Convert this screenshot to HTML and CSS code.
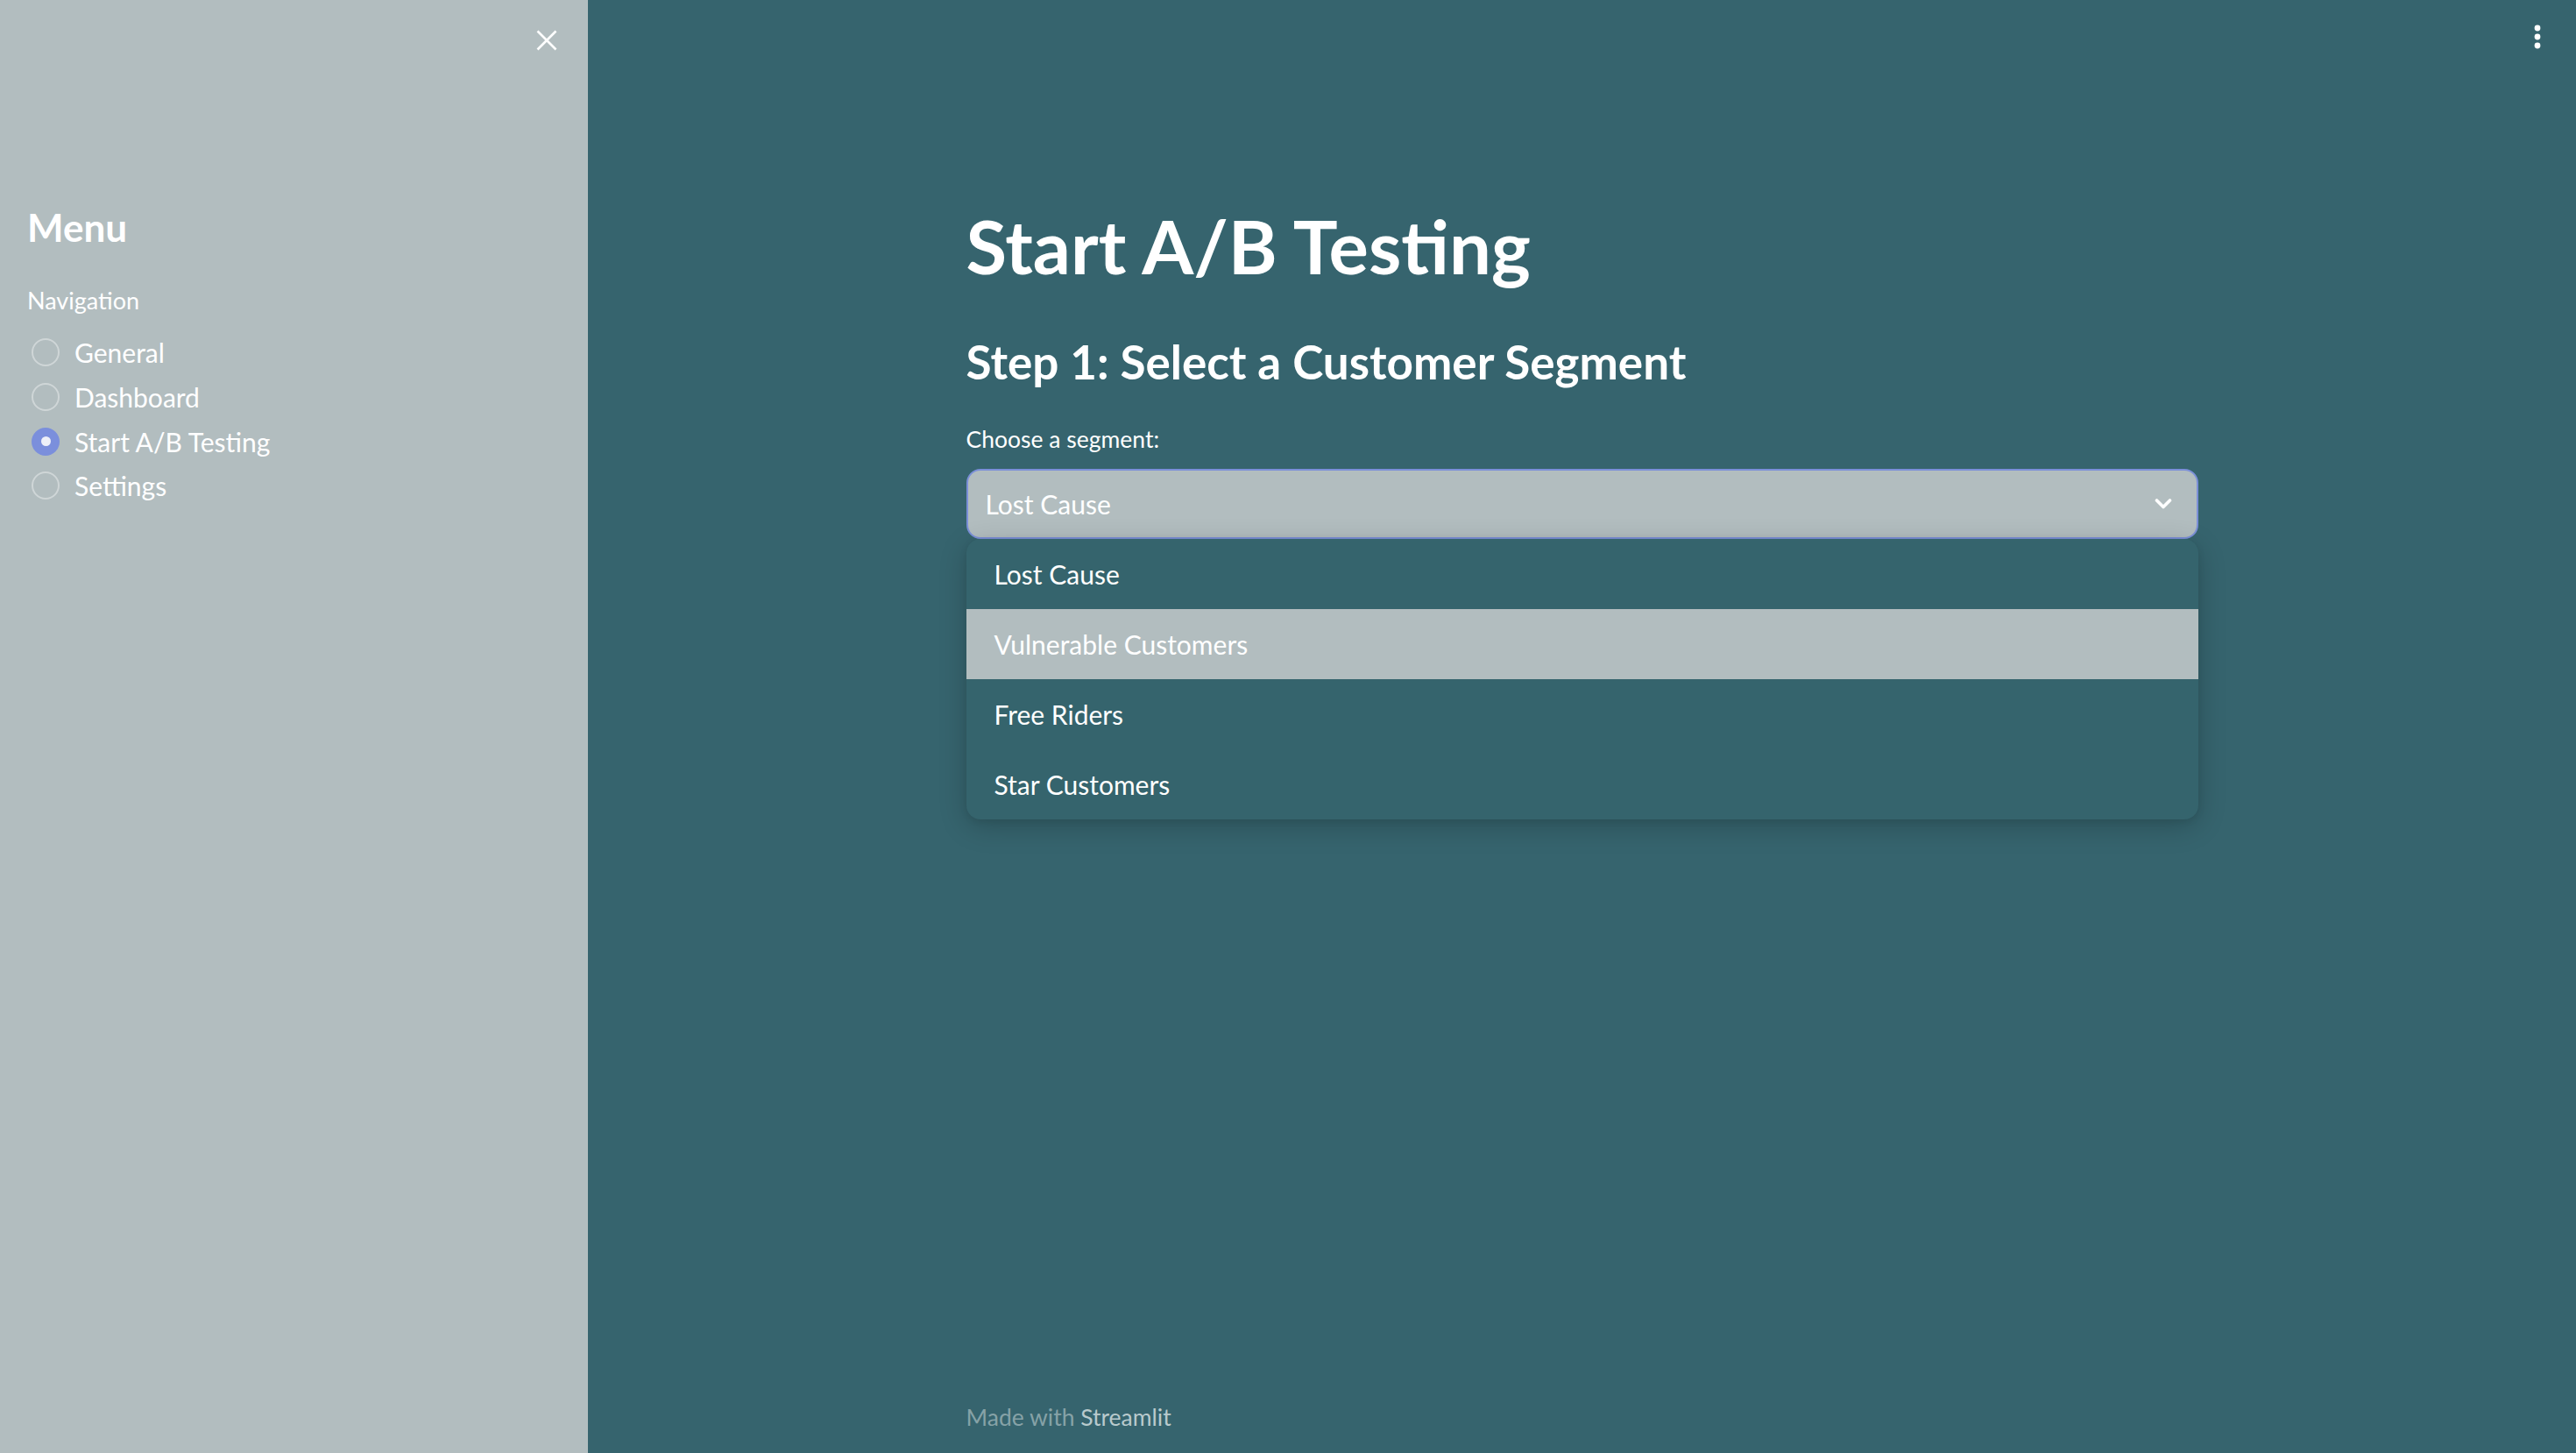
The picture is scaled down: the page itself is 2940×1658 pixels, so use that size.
FILE: index.html
```html
<!DOCTYPE html>
<html lang="en">
<head>
<meta charset="utf-8">
<title>Start A/B Testing</title>
<link rel="stylesheet" href="styles.css">
</head>
<body>
<div class="app">
  <aside class="sidebar">
    <div class="sidebar-header">
      <button class="close-btn" aria-label="Close sidebar">
        <svg width="24" height="24" viewBox="0 0 24 24"><path d="M1.5 1.5 L22.5 22.5 M22.5 1.5 L1.5 22.5" stroke="#ffffff" stroke-width="2.6" fill="none"/></svg>
      </button>
    </div>
    <div class="sidebar-content">
      <h1 class="menu-title">Menu</h1>
      <div class="nav-label">Navigation</div>
      <div class="radio-group">
        <div class="radio"><span class="radio-dot"></span><span class="radio-text">General</span></div>
        <div class="radio"><span class="radio-dot"></span><span class="radio-text">Dashboard</span></div>
        <div class="radio"><span class="radio-dot checked"></span><span class="radio-text">Start A/B Testing</span></div>
        <div class="radio"><span class="radio-dot"></span><span class="radio-text">Settings</span></div>
      </div>
    </div>
  </aside>
  <main class="main">
    <header class="toolbar">
      <svg class="kebab" width="8" height="28" viewBox="0 0 8 28"><circle cx="4" cy="4" r="3.4" fill="#fff"/><circle cx="4" cy="14" r="3.4" fill="#fff"/><circle cx="4" cy="24" r="3.4" fill="#fff"/></svg>
    </header>
    <div class="block">
      <h1 class="title">Start A/B Testing</h1>
      <h3 class="subheader">Step 1: Select a Customer Segment</h3>
      <div class="field-label">Choose a segment:</div>
      <div class="select-wrap">
        <div class="select">
          <span class="select-value">Lost Cause</span>
          <svg class="chevron" width="20" height="12" viewBox="0 0 20 12"><path d="M2.5 2 L10 9.5 L17.5 2" stroke="#fff" stroke-width="3.6" fill="none" stroke-linecap="round" stroke-linejoin="round"/></svg>
        </div>
        <ul class="options">
          <li class="option">Lost Cause</li>
          <li class="option hovered">Vulnerable Customers</li>
          <li class="option">Free Riders</li>
          <li class="option">Star Customers</li>
        </ul>
      </div>
    </div>
    <footer class="footer">Made with <span class="brand">Streamlit</span></footer>
  </main>
</div>
</body>
</html>
```

FILE: styles.css
```css
* { box-sizing: border-box; }

html, body {
  margin: 0;
  padding: 0;
  height: 100%;
}

body {
  font-family: Lato, "Noto Sans", sans-serif;
  color: #ffffff;
  background: #36646e;
  overflow: hidden;
}

.app {
  display: flex;
  height: 1658px;
}

/* Sidebar */
.sidebar {
  width: 671px;
  flex: 0 0 671px;
  background: #b2bdbf;
  display: flex;
  flex-direction: column;
}

.sidebar-header {
  display: flex;
  justify-content: flex-end;
  height: 58px;
  padding: 34px 35px 0 0;
}

.close-btn {
  width: 24px;
  height: 24px;
  padding: 0;
  border: 0;
  background: transparent;
  display: block;
  cursor: pointer;
}

.close-btn svg { display: block; }

.sidebar-content {
  padding: 0 31px;
}

.menu-title {
  margin: 175px 0 0 0;
  font-size: 44px;
  line-height: 1.2;
  font-weight: 700;
}

.nav-label {
  margin-top: 41px;
  font-size: 27px;
  line-height: 1.2;
}

.radio-group {
  margin-top: 18px;
  display: flex;
  flex-direction: column;
}

.radio {
  height: 50.6px;
  display: flex;
  align-items: center;
}

.radio-dot {
  width: 32px;
  height: 32px;
  margin-left: 5px;
  border-radius: 50%;
  border: 2px solid rgba(255, 255, 255, 0.38);
  flex: 0 0 32px;
  display: flex;
  align-items: center;
  justify-content: center;
}

.radio-dot.checked {
  background: #7b8fdc;
  border-color: #7b8fdc;
}

.radio-dot.checked::after {
  content: "";
  width: 11px;
  height: 11px;
  border-radius: 50%;
  background: #eef0f8;
}

.radio-text {
  margin-left: 17px;
  font-size: 30px;
  line-height: 1.2;
}

/* Main */
.main {
  flex: 1 1 auto;
  display: flex;
  flex-direction: column;
  background: #36646e;
}

.toolbar {
  height: 84px;
  display: flex;
  justify-content: flex-end;
  align-items: flex-start;
  padding: 28px 40px 0 0;
}

.kebab { display: block; }

.block {
  width: 1406px;
  margin: 0 auto;
}

.title {
  margin: 145px 0 0 0;
  font-size: 85px;
  line-height: 1.2;
  font-weight: 700;
}

.subheader {
  margin: 49.5px 0 0 0;
  font-size: 53px;
  line-height: 1.2;
  font-weight: 700;
}

.field-label {
  margin-top: 41.6px;
  font-size: 26.5px;
  line-height: 1.2;
}

.select-wrap {
  position: relative;
  margin-top: 17.4px;
}

.select {
  height: 80px;
  border: 2px solid #7b8fd8;
  border-radius: 16px;
  background: #b2bdbf;
  display: flex;
  align-items: center;
  justify-content: space-between;
  padding: 0 28px 0 20px;
}

.select-value {
  font-size: 30px;
  line-height: 1.2;
}

.chevron { display: block; }

.options {
  position: absolute;
  top: 80px;
  left: 0;
  right: 0;
  margin: 0;
  padding: 0;
  list-style: none;
  background: #35646d;
  border-radius: 16px;
  overflow: hidden;
  box-shadow: 0 8px 32px rgba(0, 0, 0, 0.2), 0 2px 8px rgba(0, 0, 0, 0.08);
}

.option {
  height: 80px;
  line-height: 80px;
  padding-left: 32px;
  font-size: 30px;
}

.option.hovered {
  background: #b2bdbf;
}

.footer {
  width: 1406px;
  margin: auto auto 0 auto;
  padding-bottom: 24px;
  font-size: 26.5px;
  line-height: 1.2;
  color: #86a2a7;
}

.footer .brand {
  color: #b9cacd;
}
```
